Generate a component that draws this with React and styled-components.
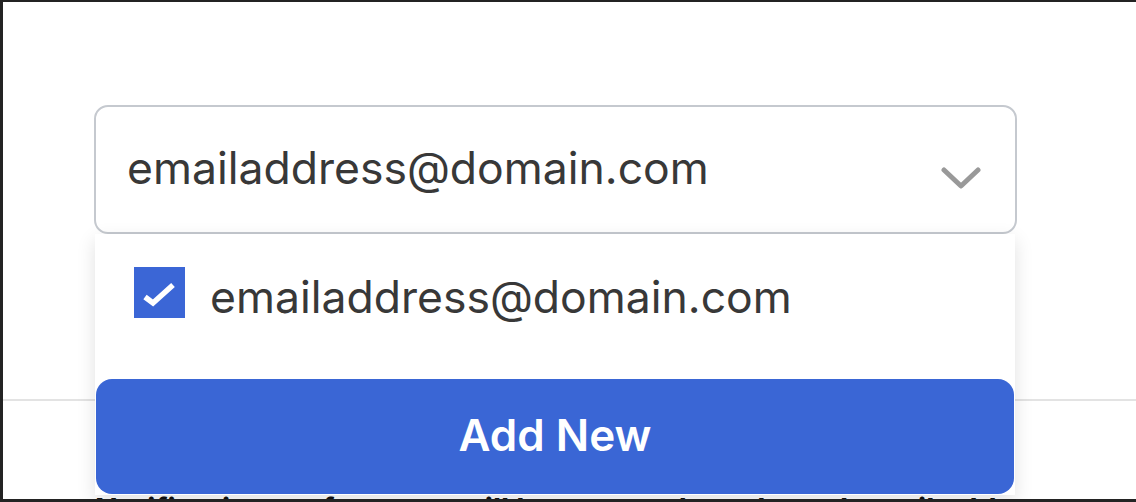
import React from "react";
import styled, { createGlobalStyle } from "styled-components";

const GlobalStyle = createGlobalStyle`
  html, body {
    margin: 0;
    padding: 0;
    background: #232323;
  }
  * {
    box-sizing: border-box;
  }
`;

const Frame = styled.div`
  width: 1136px;
  height: 502px;
  background: #232323;
  padding: 2px 0 3px 3px;
`;

const Page = styled.div`
  position: relative;
  height: 100%;
  background: #fff;
  overflow: hidden;
  padding-top: 103px;
  font-family: Inter, "Liberation Sans", sans-serif;
`;

const Select = styled.div`
  position: relative;
  margin-left: 91px;
  width: 923px;
`;

const Trigger = styled.div`
  display: flex;
  align-items: center;
  justify-content: space-between;
  height: 129px;
  padding: 0 34px 0 31px;
  border: 2px solid #c5c9cf;
  border-radius: 14px;
  background: #fff;
`;

const Value = styled.span`
  font-size: 44.5px;
  color: #383838;
  margin-top: -4px;
`;

const Menu = styled.div`
  position: absolute;
  top: 100%;
  left: 1px;
  width: 920px;
  height: 261px;
  background: #fff;
  box-shadow: 0 6px 18px rgba(0, 0, 0, 0.12);
  display: flex;
  flex-direction: column;
  padding: 33px 1px 1px;
`;

const Option = styled.label`
  display: flex;
  align-items: center;
  gap: 25px;
  padding-left: 38px;
  height: 51px;
`;

const Box = styled.span`
  width: 51px;
  height: 51px;
  background: #3b66d6;
  display: flex;
  align-items: center;
  justify-content: center;
`;

const OptionText = styled.span`
  font-size: 44.5px;
  color: #383838;
  margin-top: 8px;
`;

const AddButton = styled.button`
  margin-top: auto;
  height: 115px;
  width: 100%;
  border: none;
  border-radius: 16px;
  background: #3a66d5;
  color: #fff;
  font-family: inherit;
  font-weight: 600;
  font-size: 44px;
  padding-bottom: 4px;
`;

const Divider = styled.hr`
  margin: 165px 0 0;
  border: none;
  height: 2px;
  background: #e3e3e3;
`;

const BehindText = styled.p`
  margin: 93px 0 0 92px;
  font-size: 30px;
  font-weight: 700;
  color: #111;
  white-space: nowrap;
  line-height: 1;
`;

const Chevron = () => (
  <svg width="40" height="26" viewBox="0 0 40 26" style={{ marginTop: 16 }}>
    <polyline
      points="3,5 20,21 37,5"
      fill="none"
      stroke="#999"
      strokeWidth="5"
      strokeLinecap="round"
      strokeLinejoin="round"
    />
  </svg>
);

const Check = () => (
  <svg width="51" height="51" viewBox="0 0 51 51">
    <polyline
      points="11,30 19,36 39,18"
      fill="none"
      stroke="#fff"
      strokeWidth="5.5"
      strokeLinejoin="miter"
    />
  </svg>
);

export default function App() {
  return (
    <>
      <GlobalStyle />
      <Frame>
        <Page>
          <Select>
            <Trigger>
              <Value>emailaddress@domain.com</Value>
              <Chevron />
            </Trigger>
            <Menu>
              <Option>
                <Box>
                  <Check />
                </Box>
                <OptionText>emailaddress@domain.com</OptionText>
              </Option>
              <AddButton>Add New</AddButton>
            </Menu>
          </Select>
          <Divider />
          <BehindText>
            Notification preferences will be sent to the selected email address
          </BehindText>
        </Page>
      </Frame>
    </>
  );
}
